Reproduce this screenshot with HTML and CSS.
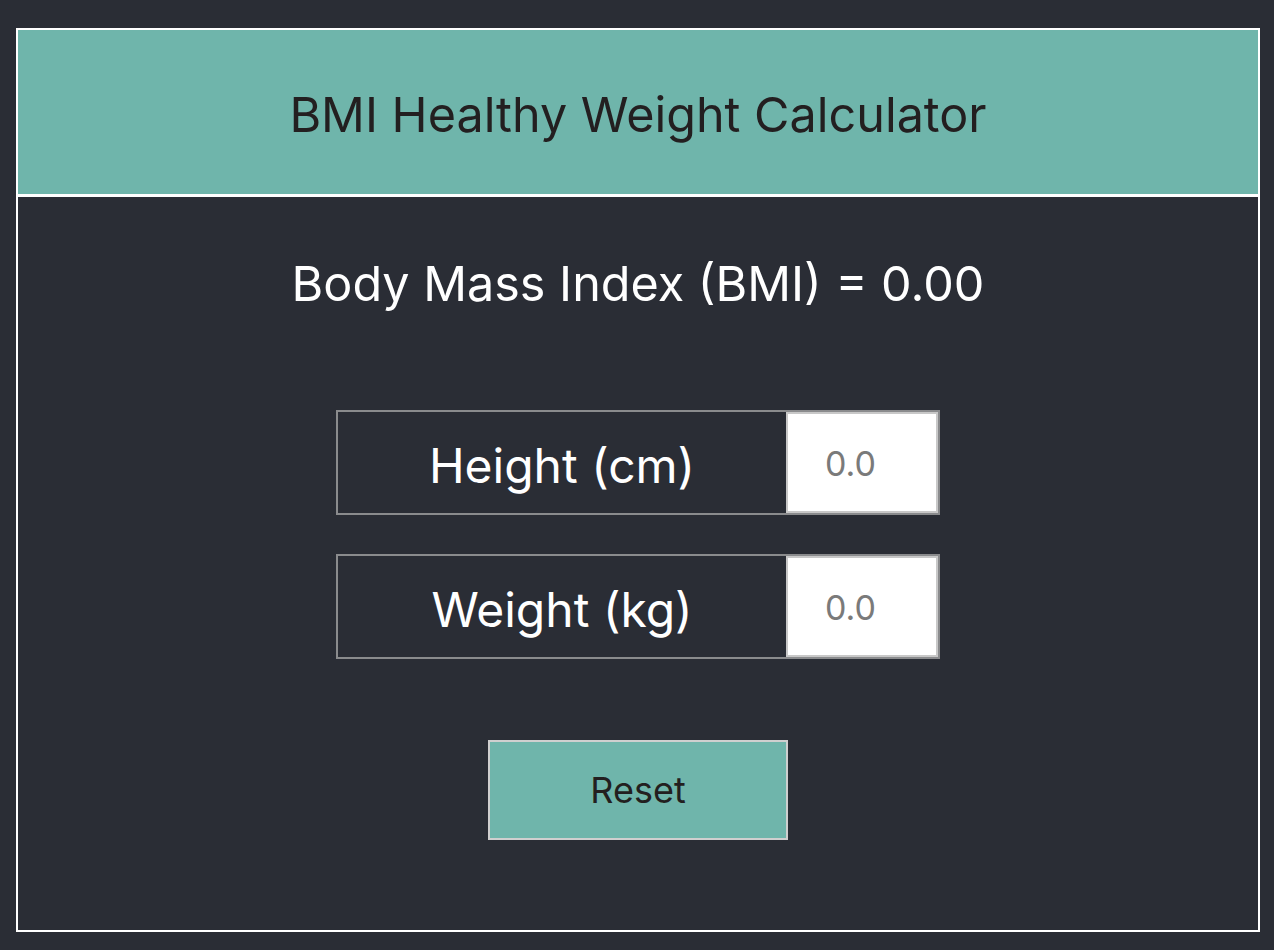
FILE: index.html
```html
<!DOCTYPE html>
<html>
<head>
<meta charset="utf-8">
<link rel="stylesheet" href="styles.css">
</head>
<body>
<div class="app">
  <header class="header">
    <h1 class="title">BMI Healthy Weight Calculator</h1>
  </header>
  <main class="content">
    <div class="result">Body Mass Index (BMI) = 0.00</div>
    <div class="fields">
      <label class="field">
        <span class="field-label">Height (cm)</span>
        <input class="field-input" type="text" placeholder="0.0">
      </label>
      <label class="field">
        <span class="field-label">Weight (kg)</span>
        <input class="field-input" type="text" placeholder="0.0">
      </label>
    </div>
    <button class="reset" type="button">Reset</button>
  </main>
</div>
</body>
</html>
```

FILE: styles.css
```css
html, body {
  margin: 0;
  padding: 0;
  background: #2a2d35;
}
body {
  padding: 28px 14px 18px 16px;
  font-family: Inter, "Noto Sans", sans-serif;
}
.app {
  width: 1240px;
  height: 900px;
  border: 2px solid #ffffff;
  display: flex;
  flex-direction: column;
}
.header {
  height: 164px;
  background: #6fb5ab;
  border-bottom: 3px solid #ffffff;
  display: flex;
  align-items: center;
  justify-content: center;
}
.title {
  margin: 4px 0 0 0;
  font-size: 48.5px;
  font-weight: 400;
  color: #231f20;
}
.content {
  display: flex;
  flex-direction: column;
  align-items: center;
}
.result {
  margin-top: 57px;
  font-size: 48.5px;
  line-height: 60px;
  color: #ffffff;
}
.fields {
  margin-top: 96px;
  display: flex;
  flex-direction: column;
  gap: 39px;
}
.field {
  width: 600px;
  height: 101px;
  border: 2px solid #8a8b8d;
  display: flex;
}
.field-label {
  flex: 1;
  display: flex;
  align-items: center;
  justify-content: center;
  font-size: 48px;
  padding-top: 6px;
  color: #ffffff;
}
.field-input {
  box-sizing: border-box;
  width: 152px;
  height: 101px;
  margin: 0;
  border: 2px solid #c8c8c8;
  background: #ffffff;
  font-family: Inter, "Noto Sans", sans-serif;
  font-size: 34px;
  text-align: left;
  padding: 2px 0 0 37px;
  outline: none;
}
.field-input::placeholder {
  color: #7a7a7a;
}
.reset {
  margin-top: 81px;
  width: 300px;
  height: 100px;
  background: #6fb5ab;
  border: 2px solid #cfcfcf;
  font-family: Inter, "Noto Sans", sans-serif;
  font-size: 36px;
  color: #231f20;
  padding: 0;
}
```
